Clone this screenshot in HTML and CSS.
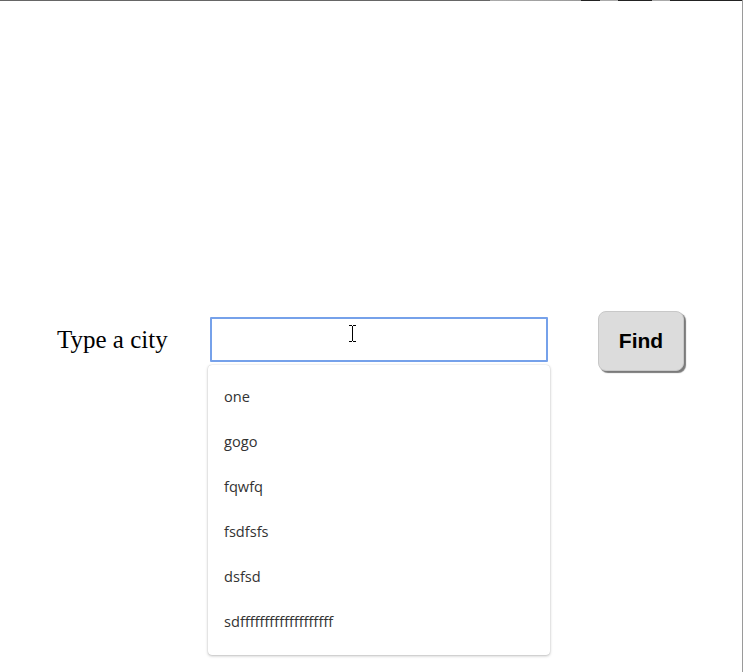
FILE: index.html
```
<!DOCTYPE html>
<html>
<head>
<meta charset="utf-8">
<link rel="stylesheet" href="styles.css">
</head>
<body>
<div class="frame">
  <div class="topline"></div>
  <div class="row">
    <label class="label">Type a city</label>
    <div class="field">
      <div class="input"></div>
      <svg class="ibeam" width="9" height="17" viewBox="0 0 9 17"><path d="M1 0.5h3M5 0.5h3M4.5 1v15M1 16.5h3M5 16.5h3" stroke="#000" stroke-width="1" fill="none"/></svg>
      <ul class="menu">
        <li>one</li>
        <li>gogo</li>
        <li>fqwfq</li>
        <li>fsdfsfs</li>
        <li>dsfsd</li>
        <li>sdfffffffffffffffffff</li>
      </ul>
    </div>
    <button class="find">Find</button>
  </div>
</div>
</body>
</html>
```
FILE: styles.css
```
html, body {
  margin: 0;
  padding: 0;
  background: #fff;
}
.frame {
  width: 742px;
  height: 672px;
  border-right: 1px solid #9a9a9a;
  position: relative;
  overflow: hidden;
}
.topline {
  height: 1px;
  background: linear-gradient(to right, #666 0, #666 490px, #aaa 490px, #999 581px, #222 581px, #222 600px, #aaa 600px, #aaa 618px, #222 618px, #222 652px, #aaa 652px, #aaa 670px, #222 670px, #222 742px);
}
.row {
  display: flex;
  align-items: center;
  padding-top: 310px;
  padding-left: 57px;
}
.label {
  font-family: "Liberation Serif", serif;
  font-size: 25px;
  color: #000;
  width: 153px;
  line-height: 28px;
  margin-top: -2px;
}
.field {
  position: relative;
  width: 338px;
  height: 45px;
  margin-right: 50px;
  align-self: flex-start;
  margin-top: 6px;
}
.input {
  box-sizing: border-box;
  width: 338px;
  height: 45px;
  border: 2px solid #76a1ea;
  border-radius: 1px;
  background: #fff;
}
.ibeam {
  position: absolute;
  left: 138px;
  top: 8px;
}
.menu {
  position: absolute;
  left: -2px;
  top: 48px;
  width: 342px;
  margin: 0;
  padding: 9px 0 11px;
  list-style: none;
  background: #fff;
  border-radius: 4px;
  box-shadow: 0 1px 3px rgba(0,0,0,0.25), 0 0 1px rgba(0,0,0,0.2);
}
.menu li {
  height: 45px;
  line-height: 45px;
  padding-left: 16px;
  font-family: "Open Sans", "Noto Sans", sans-serif;
  font-size: 14.6px;
  color: #333;
}
.find {
  box-sizing: border-box;
  width: 86px;
  height: 60px;
  background: #dcdcdc;
  border: 1px solid #c8c8c8;
  border-radius: 8px;
  box-shadow: 2px 2px 1px #7a7a7a;
  font-family: "Liberation Sans", Arial, sans-serif;
  font-weight: bold;
  font-size: 21px;
  color: #000;
  padding: 0;
}
```
